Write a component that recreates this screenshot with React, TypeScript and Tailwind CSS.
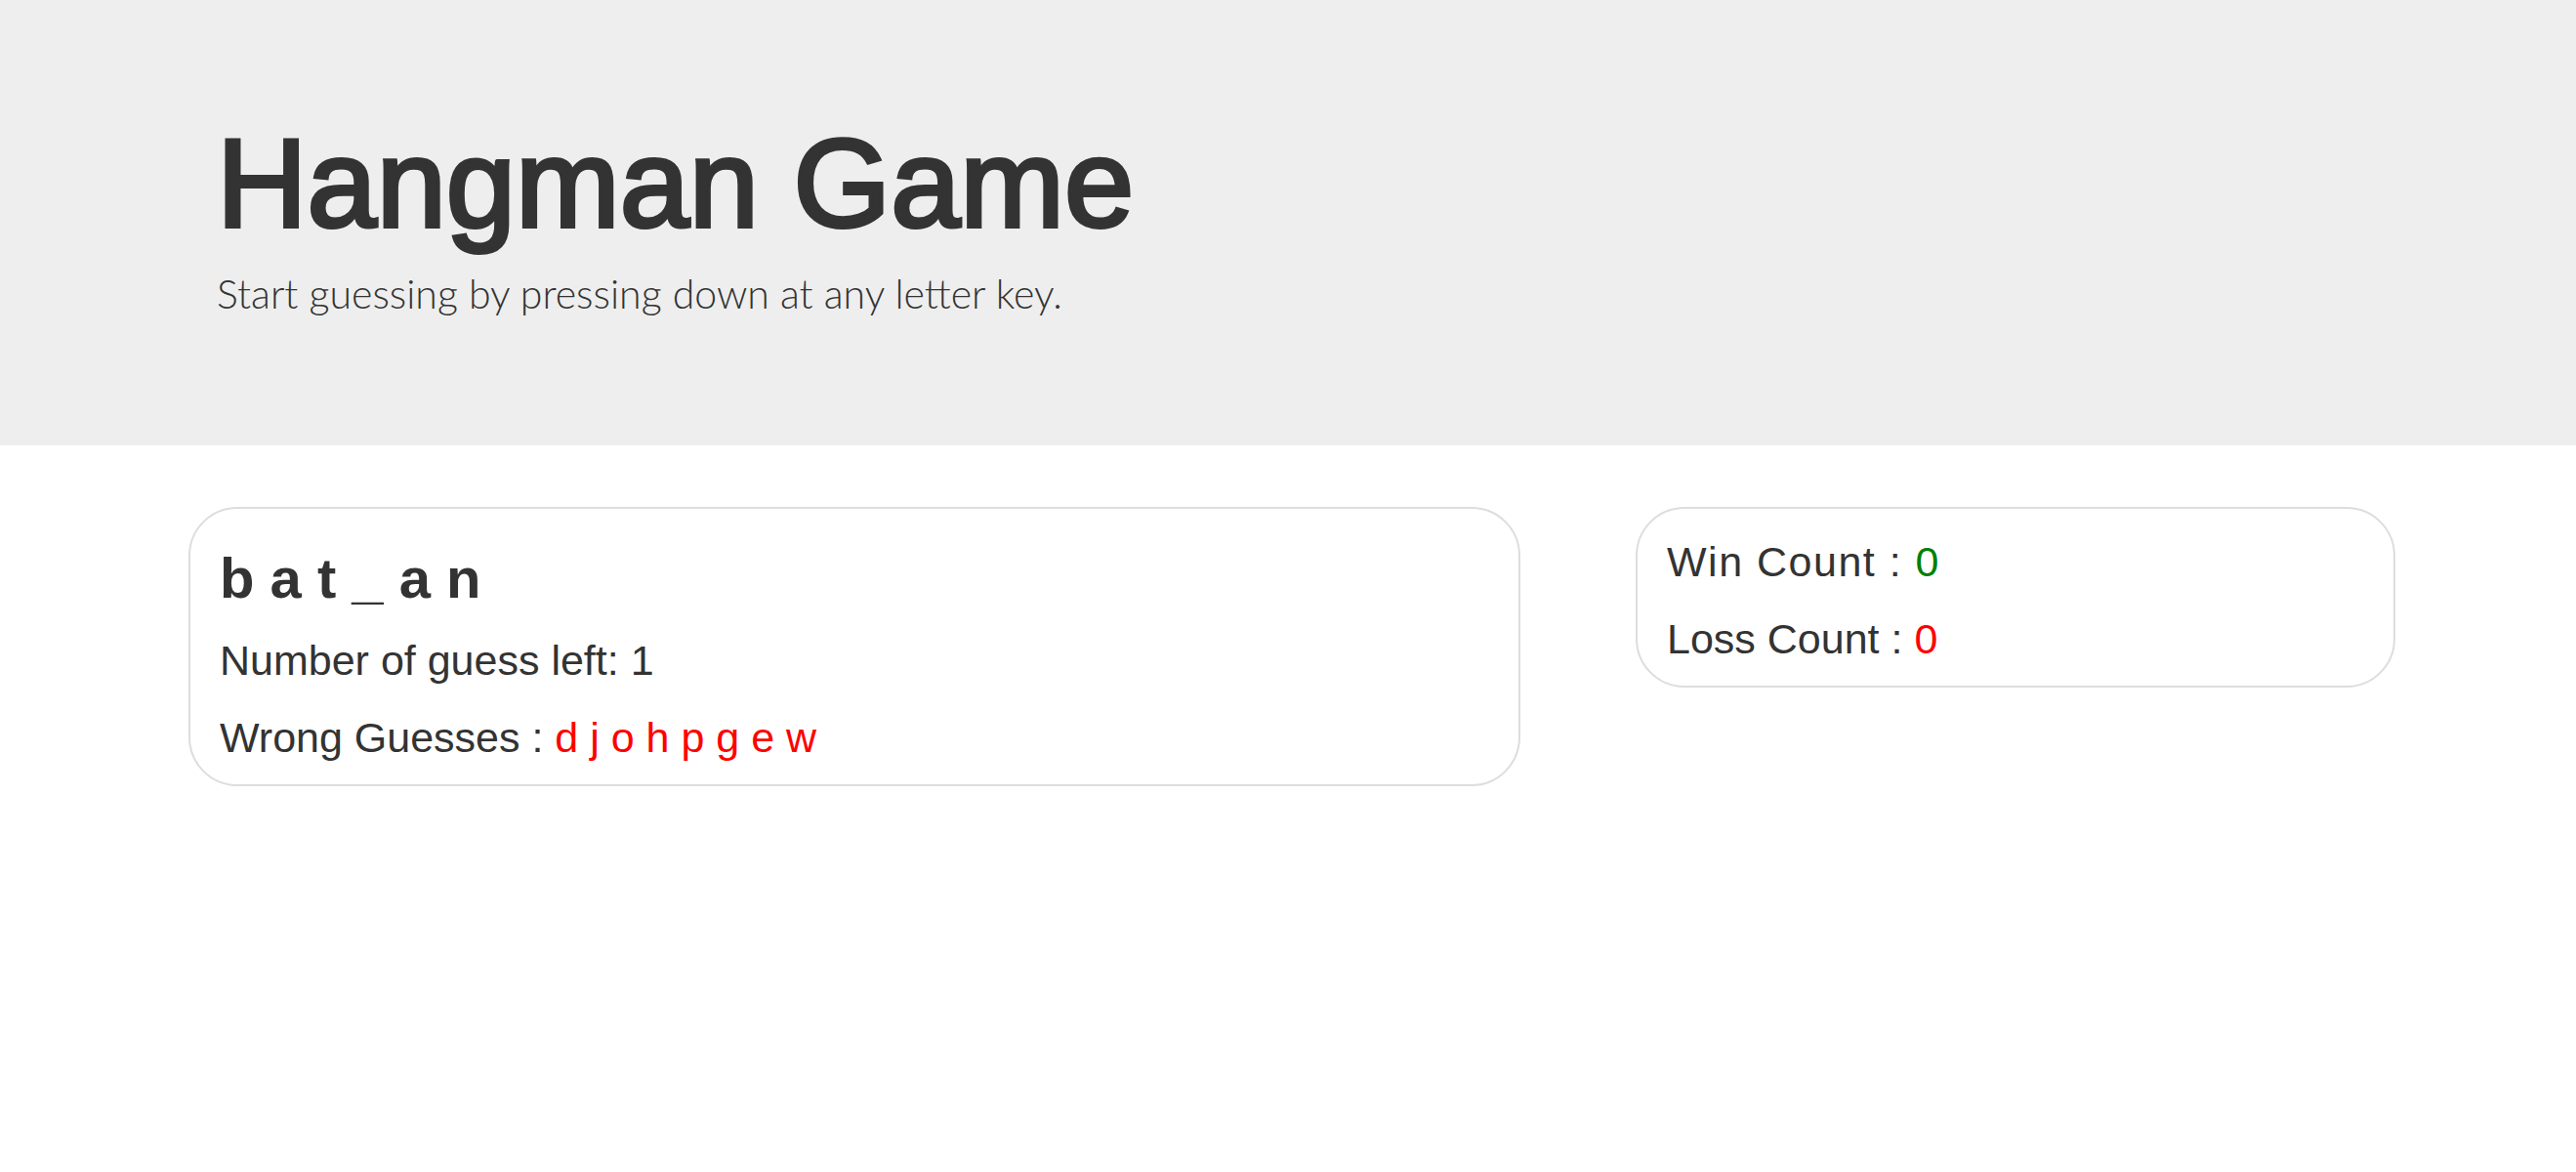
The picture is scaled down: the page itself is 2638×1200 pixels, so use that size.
import React from 'react';

const wrongGuesses = ['d', 'j', 'o', 'h', 'p', 'g', 'e', 'w'];

export default function App() {
  return (
    <div className="min-h-screen bg-white font-['Liberation_Sans',Arial,sans-serif] text-[#333333]">
      <header className="h-[456px] bg-[#eeeeee] pl-[222px] pt-[124px]">
        <h1 className="text-[128px] font-normal leading-none [-webkit-text-stroke:4px_#333333]">Hangman Game</h1>
        <p className="mt-[28px] font-['Lato',sans-serif] text-[41px] font-light leading-[42px]">
          Start guessing by pressing down at any letter key.
        </p>
      </header>

      <main className="flex items-start gap-[118px] pl-[193px] pt-[63px]">
        <section className="w-[1364px] rounded-[50px] border-2 border-[#dddddd] pb-[8px] pl-[30px] pt-[31px]">
          <h2 className="text-[58px] font-bold leading-[80px]">b a t _ a n</h2>
          <div className="mt-[5px] text-[43px] leading-[79px]">
            <p>Number of guess left: 1</p>
            <p>
              Wrong Guesses : <span className="text-[#ff0000]">{wrongGuesses.join(' ')}</span>
            </p>
          </div>
        </section>

        <section className="w-[778px] rounded-[50px] border-2 border-[#dddddd] pb-[8px] pl-[30px] pt-[15px] text-[43px] leading-[79px]">
          <p className="tracking-[1.5px]">
            Win Count : <span className="text-[#008000]">0</span>
          </p>
          <p>
            Loss Count : <span className="text-[#ff0000]">0</span>
          </p>
        </section>
      </main>
    </div>
  );
}
